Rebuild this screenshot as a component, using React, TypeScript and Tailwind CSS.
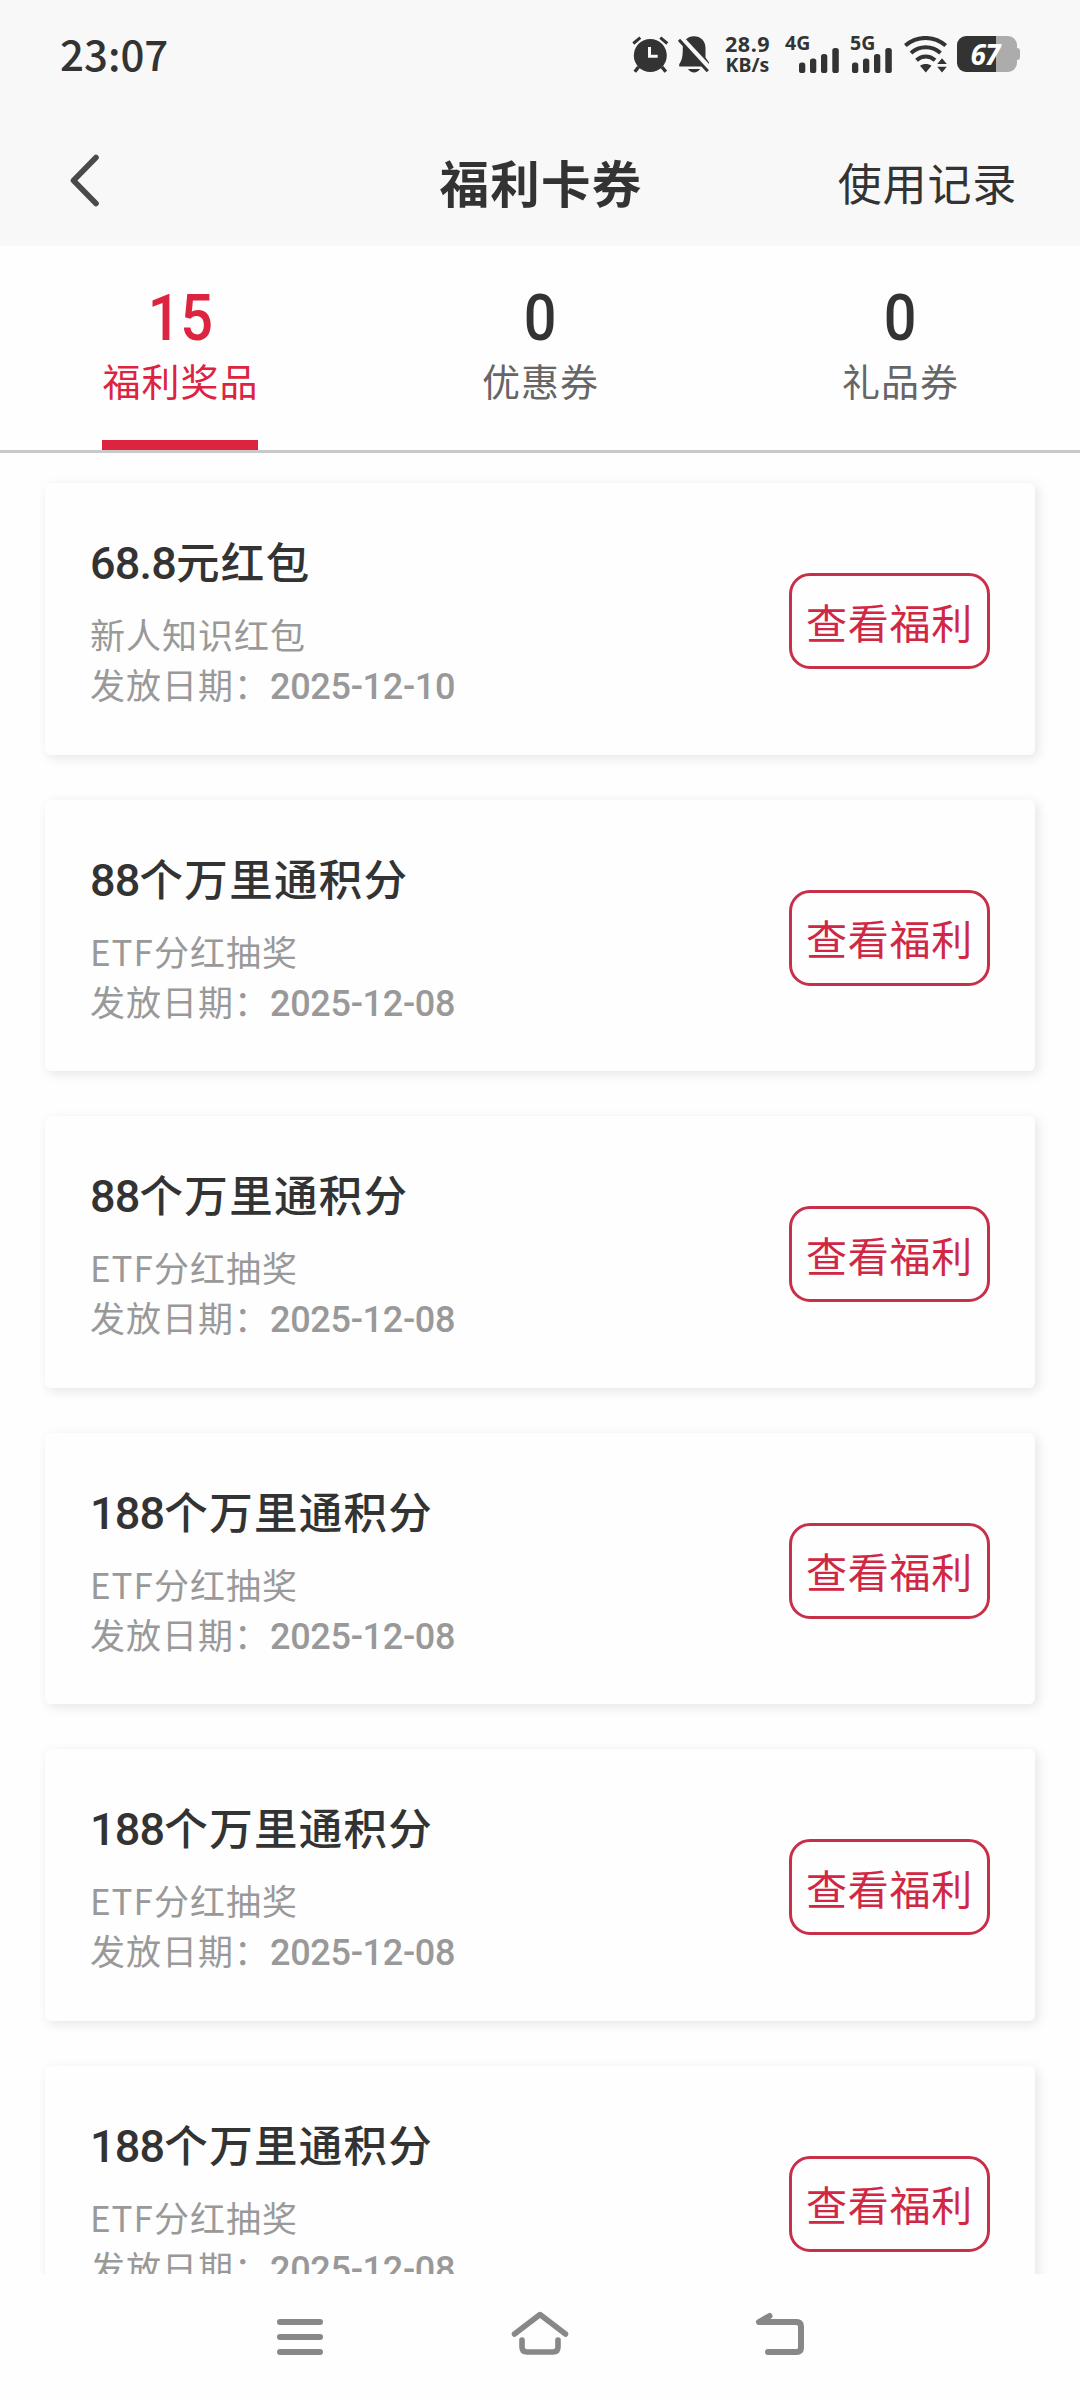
type Benefit = {
  amount: string;
  unit: string;
  source: string;
  date: string;
};

const benefits: Benefit[] = [
  { amount: "68.8", unit: "元红包", source: "新人知识红包", date: "2025-12-10" },
  { amount: "88", unit: "个万里通积分", source: "ETF分红抽奖", date: "2025-12-08" },
  { amount: "88", unit: "个万里通积分", source: "ETF分红抽奖", date: "2025-12-08" },
  { amount: "188", unit: "个万里通积分", source: "ETF分红抽奖", date: "2025-12-08" },
  { amount: "188", unit: "个万里通积分", source: "ETF分红抽奖", date: "2025-12-08" },
  { amount: "188", unit: "个万里通积分", source: "ETF分红抽奖", date: "2025-12-08" },
];

const tabs = [
  { count: 15, label: "福利奖品", active: true },
  { count: 0, label: "优惠券", active: false },
  { count: 0, label: "礼品券", active: false },
];

function AlarmIcon() {
  return (
    <svg width="37" height="37" viewBox="0 0 37 37" fill="none">
      <circle cx="18.3" cy="19.5" r="16.5" fill="#333" />
      <path d="M1.3 7.5 L8.3 1.6 M35.3 7.5 L28.3 1.6" stroke="#333" strokeWidth="3" />
      <path d="M6.5 31 L2.8 35.8 M30 31 L33.8 35.8" stroke="#333" strokeWidth="3.4" />
      <path d="M17.5 11 V20.3 H25.7" stroke="#f8f8f8" strokeWidth="3" />
    </svg>
  );
}

function BellOffIcon() {
  return (
    <svg width="32" height="37" viewBox="0 0 32 37" fill="none">
      <path
        d="M16 0.3 C22.8 0.3 27.5 5.2 27.5 12 V21.5 L31 26.5 V30.5 H1.5 C1 30.5 1 28.6 1.6 27.6 C4 23.8 4.8 20.5 4.8 12 C4.8 5.2 9.2 0.3 16 0.3 Z"
        fill="#333"
      />
      <path d="M10 33 H22 C20.5 35.4 18.5 36.4 16 36.4 C13.5 36.4 11.5 35.4 10 33 Z" fill="#333" />
      <path d="M2.5 1.5 L32.5 33.5" stroke="#f8f8f8" strokeWidth="5.5" />
      <path d="M1 3.8 L29.8 35.3" stroke="#333" strokeWidth="3" />
    </svg>
  );
}

function SignalBars() {
  return (
    <svg width="40" height="25" viewBox="0 0 40 25" fill="#333">
      <rect x="0" y="14.5" width="6.3" height="10.5" rx="2.6" />
      <rect x="11" y="10.5" width="6.3" height="14.5" rx="2.6" />
      <rect x="22" y="6" width="6.3" height="19" rx="2.6" />
      <rect x="33.3" y="0" width="6.5" height="25" rx="2.6" />
    </svg>
  );
}

function Signal({ label }: { label: string }) {
  return (
    <div className="flex h-[37px] w-[54px] flex-col">
      <span className="h-3 text-[19.5px] leading-[14px] font-bold">{label}</span>
      <div className="flex">
        <span className={label === "4G" ? "w-3.5" : "w-0.5"} />
        <SignalBars />
      </div>
    </div>
  );
}

function WifiIcon() {
  return (
    <svg width="44" height="37" viewBox="0 0 44 37" fill="none">
      <path d="M1.3 9.6 C13 -0.6 30 -0.6 41.7 9.6" stroke="#333" strokeWidth="4" />
      <path d="M7 17 C15.5 9.4 28 9.4 36.5 17" stroke="#333" strokeWidth="4" />
      <path d="M12.5 24.3 C18 19.2 25.5 19.2 31 24.3" stroke="#333" strokeWidth="4" />
      <path d="M16 29.8 C19 27.3 24.5 27.3 27.5 29.8 L21.8 36.6 Z" fill="#333" />
      <path d="M33.2 28 L38 22.3 L42.8 28 Z M33.2 30.8 L38 36.5 L42.8 30.8 Z" fill="#333" />
    </svg>
  );
}

function Battery() {
  return (
    <div className="flex items-center">
      <div className="flex h-[36px] w-[60px] items-center justify-center rounded-[9px] bg-[linear-gradient(90deg,#333_65%,#acacac_65%)] pr-1">
        <span className="text-[28px] leading-9 font-bold tracking-[-1px] text-white italic">67</span>
      </div>
      <span className="h-3 w-[3px] rounded-r-sm bg-[#acacac]" />
    </div>
  );
}

function StatusBar() {
  return (
    <div className="flex h-[108px] items-center pr-[60px] pl-[60px]">
      <span className="pb-[3px] text-[42px] font-medium">23:07</span>
      <div className="ml-auto flex items-center font-['Noto_Sans']">
        <AlarmIcon />
        <span className="w-[9px]" />
        <BellOffIcon />
        <div className="ml-3.5 flex w-[47px] flex-col items-center font-bold">
          <span className="text-[21.5px] leading-[21px] tracking-[0.5px]">28.9</span>
          <span className="text-[19.5px] leading-[21px]">KB/s</span>
        </div>
        <span className="w-3.5" />
        <Signal label="4G" />
        <span className="w-[11px]" />
        <Signal label="5G" />
        <WifiIcon />
        <span className="w-[9px]" />
        <Battery />
      </div>
    </div>
  );
}

function TitleBar() {
  return (
    <div className="grid h-[138px] grid-cols-[1fr_auto_1fr] items-center pt-[9px] pr-[63px] pl-[68px]">
      <svg width="34" height="56" viewBox="0 0 34 56" fill="none">
        <path d="M28 3.5 L5.5 26.5 L28 49.5" stroke="#4a4a4a" strokeWidth="5.6" strokeLinecap="round" strokeLinejoin="round" />
      </svg>
      <h1 className="mr-[3px] text-[49.5px] leading-none font-bold tracking-[1.3px]">福利卡券</h1>
      <span className="justify-self-end text-[44px] leading-none tracking-[0.8px]">使用记录</span>
    </div>
  );
}

function Tabs() {
  return (
    <div className="grid h-[207px] grid-cols-3 border-b-3 border-[#c9c9c9]">
      {tabs.map((tab) => (
        <div key={tab.label} className={`flex flex-col items-center pt-[41px] ${tab.active ? "text-[#dc2440]" : "text-[#333]"}`}>
          <span className="h-[65px] scale-x-90 font-[Roboto] text-[64px] leading-[63px] font-medium">{tab.count}</span>
          <span className={`pl-px text-[38px] leading-[55px] tracking-[1px] ${tab.active ? "" : "text-[#666]"}`}>{tab.label}</span>
          {tab.active && <span className="mt-auto h-2.5 w-[156px] bg-[#dc2440]" />}
        </div>
      ))}
    </div>
  );
}

function BenefitCard({ benefit }: { benefit: Benefit }) {
  return (
    <div className="flex h-[271.6px] shrink-0 items-start justify-between rounded-md bg-[#fefefe] px-[45px] shadow-[3px_3px_12px_rgba(0,0,0,0.1)]">
      <div className="pt-[51px]">
        <h2 className="text-[43.5px] leading-[54px] font-medium tracking-[1.3px]">
          <span className="font-[Roboto] text-[45px] tracking-[-0.8px]">{benefit.amount}</span>
          {benefit.unit}
        </h2>
        <p className="mt-[18px] text-[35px] leading-[50px] tracking-[1px] text-[#999]">{benefit.source}</p>
        <p className="text-[35px] leading-[50px] tracking-[1px] text-[#999]">
          发放日期：<span className="font-[Roboto] text-[36px] font-medium tracking-[-0.3px]">{benefit.date}</span>
        </p>
      </div>
      <button className="mt-[90px] h-24 w-[201px] rounded-[21px] border-3 border-[#c8304a] text-[41px] leading-none tracking-[0.8px] text-[#d02844]">
        查看福利
      </button>
    </div>
  );
}

function NavBar() {
  return (
    <div className="flex h-[126px] items-start justify-center gap-[180px] bg-[#fefefe] pt-[30px]">
      <svg width="60" height="60" viewBox="0 0 60 60" stroke="#888" strokeWidth="6" strokeLinecap="round">
        <path d="M10 18 H50 M10 33 H50 M10 48 H50" />
      </svg>
      <svg width="60" height="60" viewBox="0 0 60 60" fill="none" stroke="#888" strokeWidth="5.6" strokeLinecap="round" strokeLinejoin="round">
        <path d="M4.5 30 L30 10.5 L55.5 30" />
        <path d="M12 36 V43 Q12 48 17 48 H43 Q48 48 48 43 V36" />
      </svg>
      <svg width="60" height="60" viewBox="0 0 60 60" fill="none" stroke="#888" strokeWidth="6" strokeLinecap="round" strokeLinejoin="round">
        <path d="M19.5 12 L9 18 H46.5 Q51 18 51 22.5 V43.5 Q51 48 46.5 48 H18" />
      </svg>
    </div>
  );
}

export default function App() {
  return (
    <div className="flex h-[2400px] w-[1080px] flex-col overflow-hidden bg-[#fefefe] font-['Noto_Sans_CJK_SC',sans-serif] text-[#333]">
      <header className="bg-[#f8f8f8]">
        <StatusBar />
        <TitleBar />
      </header>
      <Tabs />
      <main className="flex min-h-0 flex-1 flex-col gap-[45px] overflow-hidden px-[45px] pt-[30px]">
        {benefits.map((benefit, i) => (
          <BenefitCard key={i} benefit={benefit} />
        ))}
      </main>
      <NavBar />
    </div>
  );
}
